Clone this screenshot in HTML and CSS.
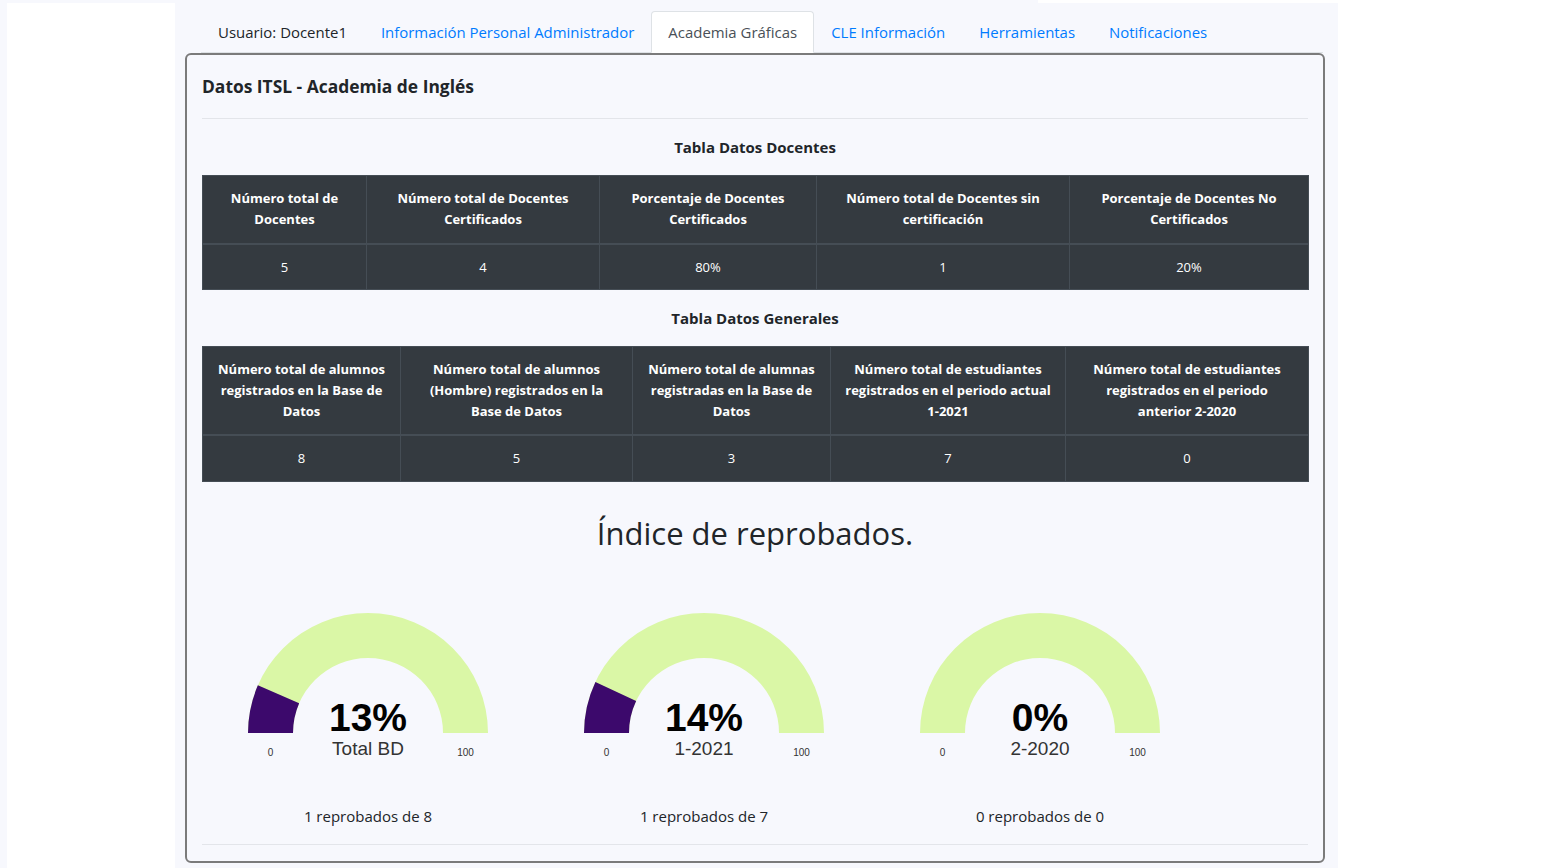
FILE: index.html
```html
<!DOCTYPE html>
<html lang="es">
<head>
<meta charset="utf-8">
<title>Academia Gráficas</title>
<link rel="stylesheet" href="styles.css">
</head>
<body>
<div class="layout">
  <aside class="side-left"></aside>
  <main class="main">
    <div class="top-strip"></div>
    <ul class="tabs">
      <li class="tab tab-user">Usuario: Docente1</li>
      <li class="tab tab-link">Información Personal Administrador</li>
      <li class="tab tab-active">Academia Gráficas</li>
      <li class="tab tab-link">CLE Información</li>
      <li class="tab tab-link">Herramientas</li>
      <li class="tab tab-link">Notificaciones</li>
    </ul>
    <section class="card">
      <h5 class="card-title">Datos ITSL - Academia de Inglés</h5>
      <hr class="rule">
      <div class="caption">Tabla Datos Docentes</div>
      <table class="dtable t1">
        <colgroup><col style="width:164px"><col style="width:233px"><col style="width:217px"><col style="width:253px"><col style="width:239px"></colgroup>
        <thead>
          <tr>
            <th>Número total de Docentes</th>
            <th>Número total de Docentes Certificados</th>
            <th>Porcentaje de Docentes Certificados</th>
            <th>Número total de Docentes sin certificación</th>
            <th>Porcentaje de Docentes No Certificados</th>
          </tr>
        </thead>
        <tbody>
          <tr><td>5</td><td>4</td><td>80%</td><td>1</td><td>20%</td></tr>
        </tbody>
      </table>
      <div class="caption">Tabla Datos Generales</div>
      <table class="dtable t2">
        <colgroup><col style="width:198px"><col style="width:232px"><col style="width:198px"><col style="width:235px"><col style="width:243px"></colgroup>
        <thead>
          <tr>
            <th>Número total de alumnos registrados en la Base de Datos</th>
            <th>Número total de alumnos (Hombre) registrados en la Base de Datos</th>
            <th>Número total de alumnas registradas en la Base de Datos</th>
            <th>Número total de estudiantes registrados en el periodo actual 1-2021</th>
            <th>Número total de estudiantes registrados en el periodo anterior 2-2020</th>
          </tr>
        </thead>
        <tbody>
          <tr><td>8</td><td>5</td><td>3</td><td>7</td><td>0</td></tr>
        </tbody>
      </table>
      <h2 class="section-title">Índice de reprobados.</h2>
      <div class="gauges">
        <div class="gauge">
          <svg class="gauge-svg" width="336" height="210" viewBox="0 0 336 210">
            <path class="g-bg" d="M48 160 A120 120 0 0 1 288 160 L243 160 A75 75 0 0 0 93 160 Z"/>
            <path class="g-val" d="M48 160 A120 120 0 0 1 57.86 112.35 L99.16 130.22 A75 75 0 0 0 93 160 Z"/>
            <text class="g-num" x="168" y="158">13%</text>
            <text class="g-title" x="168" y="182">Total BD</text>
            <text class="g-lbl" x="70.5" y="183">0</text>
            <text class="g-lbl" x="265.5" y="183">100</text>
          </svg>
          <p class="gauge-note">1 reprobados de 8</p>
        </div>
        <div class="gauge">
          <svg class="gauge-svg" width="336" height="210" viewBox="0 0 336 210">
            <path class="g-bg" d="M48 160 A120 120 0 0 1 288 160 L243 160 A75 75 0 0 0 93 160 Z"/>
            <path class="g-val" d="M48 160 A120 120 0 0 1 59.42 108.9 L100.14 128.06 A75 75 0 0 0 93 160 Z"/>
            <text class="g-num" x="168" y="158">14%</text>
            <text class="g-title" x="168" y="182">1-2021</text>
            <text class="g-lbl" x="70.5" y="183">0</text>
            <text class="g-lbl" x="265.5" y="183">100</text>
          </svg>
          <p class="gauge-note">1 reprobados de 7</p>
        </div>
        <div class="gauge">
          <svg class="gauge-svg" width="336" height="210" viewBox="0 0 336 210">
            <path class="g-bg" d="M48 160 A120 120 0 0 1 288 160 L243 160 A75 75 0 0 0 93 160 Z"/>
            <text class="g-num" x="168" y="158">0%</text>
            <text class="g-title" x="168" y="182">2-2020</text>
            <text class="g-lbl" x="70.5" y="183">0</text>
            <text class="g-lbl" x="265.5" y="183">100</text>
          </svg>
          <p class="gauge-note">0 reprobados de 0</p>
        </div>
      </div>
      <hr class="rule rule-bottom">
    </section>
  </main>
  <aside class="side-right"></aside>
</div>
</body>
</html>
```

FILE: styles.css
```css
* { box-sizing: border-box; }

html, body {
  margin: 0;
  padding: 0;
  height: 100%;
}

body {
  background: #f7f8fd;
  font-family: "Open Sans", "Noto Sans", sans-serif;
  color: #212529;
  overflow: hidden;
}

.layout {
  display: flex;
  height: 868px;
}

.side-left {
  width: 168px;
  margin-left: 7px;
  margin-top: 3px;
  background: #ffffff;
  flex: none;
}

.main {
  width: 1163px;
  flex: none;
  position: relative;
  padding: 11px 13px 0 10px;
}

.top-strip {
  position: absolute;
  top: 0;
  right: 0;
  width: 300px;
  height: 3px;
  background: #ffffff;
}

.side-right {
  flex: 1;
  background: #ffffff;
}

.tabs {
  list-style: none;
  margin: 0 2px 0 16px;
  padding: 0;
  display: flex;
  border-bottom: 1px solid #dee2e6;
  height: 42px;
}

.tab {
  font-size: 14.95px;
  line-height: 24px;
  padding: 8px 16px;
  border: 1px solid transparent;
  border-top-left-radius: 4px;
  border-top-right-radius: 4px;
  white-space: nowrap;
  height: 42px;
}

.tab-user { color: #212529; }
.tab-link { color: #007bff; }
.tab-active {
  color: #495057;
  background: #ffffff;
  border-color: #dee2e6 #dee2e6 #ffffff;
}

.card {
  border: 2px solid #7b7b7b;
  border-radius: 6px;
  padding: 0 15px 0 15px;
  height: 810px;
  margin-top: 0;
}

.card-title {
  margin: 19px 0 0 0;
  font-size: 17.4px;
  line-height: 24px;
  font-weight: 700;
  color: #212529;
}

.rule {
  margin: 20px 0 0 0;
  border: 0;
  border-top: 1px solid #e3e5ea;
  height: 0;
}

.caption {
  margin: 17px 0;
  text-align: center;
  font-weight: 700;
  font-size: 15px;
  line-height: 22px;
  color: #212529;
}

.dtable {
  width: 100%;
  border-collapse: collapse;
  table-layout: fixed;
  background: #343a40;
  color: #ffffff;
  font-size: 13px;
  line-height: 21px;
}

.dtable th,
.dtable td {
  border: 1px solid #454d55;
  padding: 12px 12px 11px;
  text-align: center;
  vertical-align: middle;
}

.dtable th {
  font-weight: 700;
  padding: 12px 12px 13px;
}

.dtable thead th {
  border-bottom-width: 2px;
}

.t2 th {
  padding-bottom: 12px;
}

.t2 td {
  padding-bottom: 12px;
}

.section-title {
  margin: 31px 0 0 0;
  text-align: center;
  font-size: 31px;
  line-height: 40px;
  font-weight: 400;
  color: #212529;
}

.gauges {
  display: grid;
  grid-template-columns: repeat(3, 336px);
  margin: 20px 0 0 -2px;
}

.gauge {
  display: flex;
  flex-direction: column;
  align-items: center;
}

.gauge-svg {
  display: block;
}

.g-bg { fill: #daf7a6; }
.g-val { fill: #3c096c; }

.g-num {
  font-family: "Liberation Sans", Arial, sans-serif;
  font-weight: 700;
  font-size: 39px;
  text-anchor: middle;
  fill: #010101;
}

.g-title {
  font-family: "Liberation Sans", Arial, sans-serif;
  font-size: 19px;
  text-anchor: middle;
  fill: #333333;
}

.g-lbl {
  font-family: "Liberation Sans", Arial, sans-serif;
  font-size: 10px;
  text-anchor: middle;
  fill: #333333;
}

.gauge-note {
  margin: 21px 0 0 0;
  font-size: 15px;
  line-height: 24px;
  color: #212529;
}

.rule-bottom {
  margin-top: 16px;
}
```
